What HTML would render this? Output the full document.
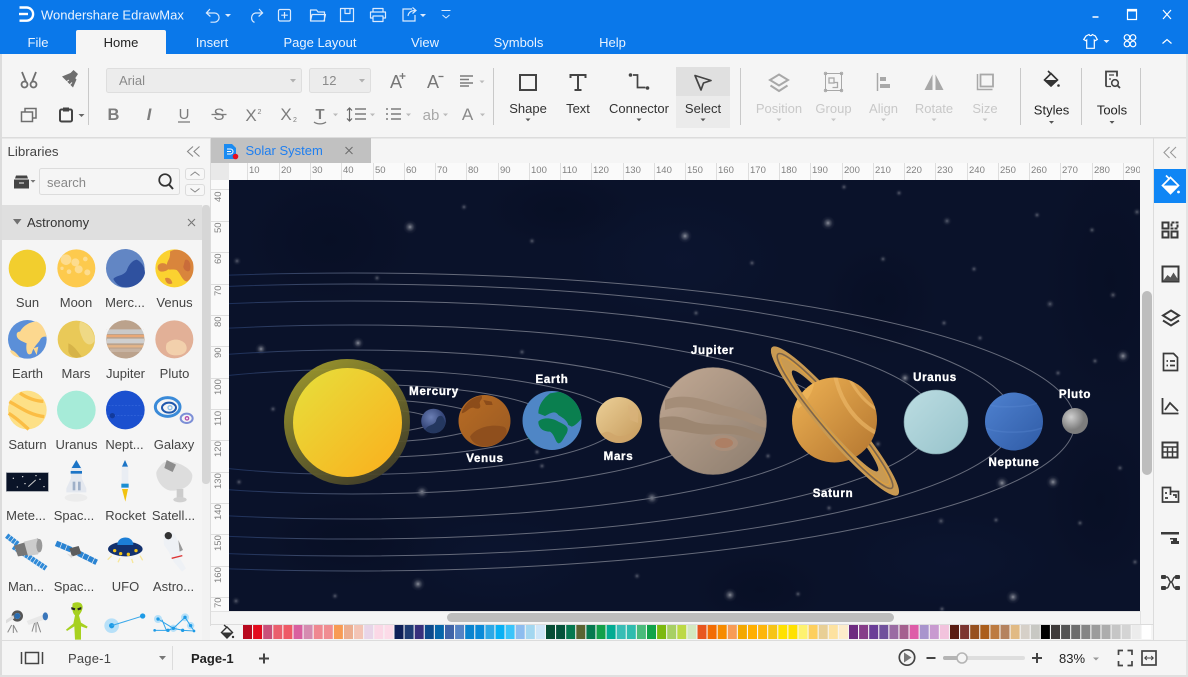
<!DOCTYPE html>
<html><head><meta charset="utf-8"><title>Wondershare EdrawMax</title>
<style>
html,body{margin:0;padding:0;background:#f5f5f5;overflow:hidden}
svg{display:block}
text{font-family:"Liberation Sans",sans-serif;font-size:13px;fill:#444}
.t{fill:#eaf3fe}
.lb{text-anchor:middle}
.dis{fill:#c8c8c8;text-anchor:middle}
.dk{fill:#333;text-anchor:middle}
.r{font-size:9.5px;fill:#808080}
.p{font-family:"Liberation Sans",sans-serif;font-weight:bold;font-size:11.5px;letter-spacing:.7px;fill:#fff;text-anchor:middle;stroke:#fff;stroke-width:.35}
.w{fill:none;stroke:#dbeafd;stroke-width:1.2}
.g{fill:none;stroke:#6e6e6e;stroke-width:1.5}
.gd{fill:none;stroke:#444;stroke-width:1.7}
.ds{fill:none;stroke:#a8a8a8;stroke-width:1.5}
</style></head><body>
<svg xmlns="http://www.w3.org/2000/svg" width="1188" height="677" viewBox="0 0 1188 677">
<defs>
<radialGradient id="st"><stop offset="0" stop-color="#fff" stop-opacity=".52"/><stop offset=".3" stop-color="#fff" stop-opacity=".26"/><stop offset=".65" stop-color="#fff" stop-opacity=".06"/><stop offset="1" stop-color="#fff" stop-opacity="0"/></radialGradient>
<radialGradient id="blob"><stop offset="0" stop-color="#030818" stop-opacity=".28"/><stop offset="1" stop-color="#030818" stop-opacity="0"/></radialGradient>
<radialGradient id="blob2"><stop offset="0" stop-color="#0f1b3c" stop-opacity=".3"/><stop offset="1" stop-color="#0f1b3c" stop-opacity="0"/></radialGradient>
<linearGradient id="orb" gradientUnits="userSpaceOnUse" x1="229" y1="0" x2="420" y2="0"><stop offset="0" stop-color="#1c2f5a"/><stop offset="1" stop-color="#656a7a"/></linearGradient>
<linearGradient id="halo" x1="0.1" y1="0" x2=".7" y2="1"><stop offset="0" stop-color="#a8a22c"/><stop offset="1" stop-color="#45412a"/></linearGradient>
<linearGradient id="sun" x1="0" y1="0" x2="1" y2="1"><stop offset="0" stop-color="#e6e03c"/><stop offset="1" stop-color="#fbae1c"/></linearGradient>
<linearGradient id="ven" x1="0" y1="0" x2="1" y2="1"><stop offset="0" stop-color="#b86c24"/><stop offset="1" stop-color="#9a5a22"/></linearGradient>
<linearGradient id="mars" x1="0" y1="0" x2="1" y2="1"><stop offset="0" stop-color="#ecd098"/><stop offset="1" stop-color="#c59a5c"/></linearGradient>
<linearGradient id="jup" x1="0" y1="0" x2=".9" y2="1"><stop offset="0" stop-color="#c2a994"/><stop offset="1" stop-color="#8f7f70"/></linearGradient>
<linearGradient id="sat" x1="0" y1="0" x2="1" y2="1"><stop offset="0" stop-color="#eeb254"/><stop offset="1" stop-color="#b3752f"/></linearGradient>
<linearGradient id="ura" x1="0" y1="0" x2="1" y2="1"><stop offset="0" stop-color="#bcdde2"/><stop offset="1" stop-color="#97c3cb"/></linearGradient>
<linearGradient id="nep" x1="0" y1="0" x2="1" y2="1"><stop offset="0" stop-color="#4f82d0"/><stop offset="1" stop-color="#2f5ba6"/></linearGradient>
<radialGradient id="plu" cx=".35" cy=".35"><stop offset="0" stop-color="#cfcfcf"/><stop offset="1" stop-color="#7d7d7d"/></radialGradient>
<radialGradient id="mer" cx=".4" cy=".35"><stop offset="0" stop-color="#6b7fb4"/><stop offset="1" stop-color="#36477a"/></radialGradient>
<clipPath id="cv"><rect x="229" y="180" width="911" height="431"/></clipPath>
<clipPath id="hr"><rect x="229" y="163" width="911" height="17"/></clipPath>
<clipPath id="lc"><rect x="0" y="0" width="606" height="765"/></clipPath>
<clipPath id="ringF"><rect x="-110" y="0" width="220" height="40"/></clipPath>
<clipPath id="satC"><circle cx="834.5" cy="420" r="42.5"/></clipPath>
<clipPath id="jupC"><circle cx="713" cy="421" r="53.5"/></clipPath>
<clipPath id="earC"><circle cx="552" cy="420.5" r="29.5"/></clipPath>
<clipPath id="merC"><circle cx="433.5" cy="421" r="12.3"/></clipPath>
</defs>

<rect width="1188" height="677" fill="#f5f5f5"/>
<!-- title bar -->
<rect width="1188" height="54" fill="#0a78ea"/>
<path d="M76 54V32a2 2 0 0 1 2-2h86a2 2 0 0 1 2 2v22z" fill="#f5f5f5"/>
<g fill="none" stroke="#fff" stroke-width="2.4"><path d="M19.500 7.500h7a6.600 6.600 0 0 1 0 13.200H19.500"/><path d="M19 14h9"/></g>
<text x="41" y="19.500" class="t">Wondershare EdrawMax</text>
<g class="w">
<path d="M210 9l-3.600 4 4 3.500"/><path d="M206.500 13h8a4.600 4.600 0 0 1 0 9.200h-4"/>
<path d="M259 9l3.600 4-4 3.500"/><path d="M262.500 13h-7a5 5 0 0 0-1 9.400"/>
<rect x="278.500" y="9.500" width="12" height="11.500" rx="1.500"/><path d="M284.500 12v6.500M281.200 15.200h6.600"/>
<path d="M310.500 21V10h6l1.500 2h6.500v9zM310.500 21l1.500-6.500h13.500L324 21" stroke-linejoin="round"/>
<path d="M340.500 8.500h13v13h-13zM345 8.500v5h5v-5" stroke-linejoin="round"/>
<path d="M373 12V8.500h10V12M373 18h-2.500v-6h15v6H383M373 16h10v5.500h-10z" stroke-linejoin="round"/>
<path d="M412 9h-9v12h12v-6"/><path d="M408 16c.5-3.500 3-5.500 7.500-5.500M412.500 7.500l3.500 3-3.500 3"/>
<path d="M441.500 10.500h9M442.500 15l3.500 3 3.500-3" stroke-width="1"/>
<path d="M1092.500 17h6" stroke="#fff" stroke-width="1.500"/><path d="M1127.500 9.500h9v10h-9z" stroke="#fff"/><path d="M1127.500 10.500h9" stroke="#fff" stroke-width="2"/><path d="M1163 10l8 9M1171 10l-8 9" stroke="#fff"/>
<path d="M1086 36l3-1.500c.8 1.600 2.500 1.600 3.300 0l3 1.500 2 3.500-2.300 1.300-.7-.7v8.200h-7.600v-8.200l-.7.700-2.300-1.300z" stroke="#fff"/>
<g stroke="#fff"><circle cx="1127" cy="37.500" r="2.800"/><circle cx="1133" cy="37.500" r="2.800"/><circle cx="1127" cy="44" r="2.800"/><circle cx="1133" cy="44" r="2.800"/></g>
<path d="M1162.500 43.500l4.500-4 4.500 4" stroke="#fff"/>
</g>
<g fill="#dbeafd"><path d="M225 14h6l-3 3zM420 14h6l-3 3zM1103.500 40h6l-3 3z"/></g>
<text x="38" y="47" class="t" text-anchor="middle">File</text>
<text x="121" y="47" text-anchor="middle" style="fill:#222">Home</text>
<text x="212" y="47" class="t" text-anchor="middle">Insert</text>
<text x="320" y="47" class="t" text-anchor="middle">Page Layout</text>
<text x="425" y="47" class="t" text-anchor="middle">View</text>
<text x="518.500" y="47" class="t" text-anchor="middle">Symbols</text>
<text x="612.500" y="47" class="t" text-anchor="middle">Help</text>

<!-- ribbon -->
<rect y="54" width="1188" height="83" fill="#f5f5f5"/>
<rect y="54" width="2" height="623" fill="#dcdcdc"/>
<rect y="137" width="1188" height="1.500" fill="#dcdcdc"/>
<rect x="1186" y="54" width="2" height="623" fill="#e4e4e4"/>
<g fill="#c9c9c9"><rect x="88" y="68" width="1" height="57"/><rect x="493" y="68" width="1" height="57"/><rect x="740" y="68" width="1" height="57"/><rect x="1020" y="68" width="1" height="57"/><rect x="1081" y="68" width="1" height="57"/><rect x="1140" y="68" width="1" height="57"/></g>
<rect x="676" y="67" width="54" height="29" fill="#e0e0e0"/><rect x="676" y="96" width="54" height="32" fill="#ebebeb"/>
<!-- clipboard icons -->
<g fill="none" stroke="#6e6e6e" stroke-width="1.800">
<circle cx="24.500" cy="84.500" r="3"/><circle cx="33.500" cy="84.500" r="3"/><path d="M26 82l-4-10M32 82l4-10"/>
</g>
<path d="M62 76.500l8.500-3.500 6 6.500-3.500 8zM70 73.500l3.500-3.500 4.500 4-3 4.500z" fill="#6e6e6e"/>
<path d="M66 82l3-2M69.500 85l2.500-2.500" stroke="#f5f5f5" stroke-width="1"/>
<g class="g" stroke-width="1.800"><rect x="21.500" y="112" width="11" height="9.500"/><path d="M25 112v-3.500h11v9.500h-3.500"/></g>
<g class="gd"><rect x="60" y="109.500" width="12" height="12" rx="1.500" stroke-width="2"/><rect x="63" y="107.500" width="6" height="4" fill="#444" stroke="none"/></g>
<path d="M78.500 114h6l-3 3z" fill="#666"/>
<!-- font -->
<rect x="106.500" y="68.500" width="195" height="24" rx="2" fill="#ececec" stroke="#dedede"/>
<rect x="309.500" y="68.500" width="61" height="24" rx="2" fill="#ececec" stroke="#dedede"/>
<text x="119" y="85" style="fill:#8a8a8a">Arial</text><text x="322" y="85" style="fill:#8a8a8a">12</text>
<path d="M290 79h6l-3 3.500zM359 79h6l-3 3.500z" fill="#b0b0b0"/>
<text x="390" y="88" style="font-size:18px;fill:#777">A</text><path d="M402.500 73v6M399.500 76h6" stroke="#777" stroke-width="1.300"/>
<text x="427" y="88" style="font-size:18px;fill:#777">A</text><path d="M438.500 76.500h5" stroke="#777" stroke-width="1.300"/>
<g stroke="#7d7d7d" stroke-width="1.500"><path d="M460 76h13M460 79.500h9M460 83h13M460 86h9"/></g>
<path d="M479.500 80.500h5l-2.500 2.800z" fill="#bbb"/>
<text x="113.500" y="120" text-anchor="middle" style="font-size:16.500px;font-weight:bold;fill:#7d7d7d">B</text>
<text x="149" y="120" text-anchor="middle" style="font-size:16.500px;font-style:italic;font-weight:bold;fill:#7d7d7d">I</text>
<text x="184" y="119" text-anchor="middle" style="font-size:15px;fill:#7d7d7d">U</text><path d="M178 122h12" stroke="#7d7d7d" stroke-width="1.300"/>
<text x="219" y="120" text-anchor="middle" style="font-size:16.500px;fill:#7d7d7d">S</text><path d="M211.500 114.500h15" stroke="#7d7d7d" stroke-width="1.300"/>
<text x="251" y="121" text-anchor="middle" style="font-size:17px;fill:#7d7d7d">X</text><text x="259.500" y="114" text-anchor="middle" style="font-size:7px;fill:#7d7d7d">2</text>
<text x="286" y="120" text-anchor="middle" style="font-size:17px;fill:#7d7d7d">X</text><text x="295" y="122" text-anchor="middle" style="font-size:7px;fill:#7d7d7d">2</text>
<text x="320" y="119" text-anchor="middle" style="font-size:15px;font-weight:bold;fill:#7d7d7d">T</text><path d="M314 122c3 2.500 9 2.500 12 0" fill="none" stroke="#7d7d7d" stroke-width="1.300"/>
<path d="M349.500 108v13M347 110.500l2.500-2.500 2.500 2.500M347 118.500l2.500 2.500 2.500-2.500" fill="none" stroke="#666" stroke-width="1.200"/>
<path d="M355 109h11M355 114h11M355 119h11" stroke="#7d7d7d" stroke-width="1.600"/>
<g stroke="#7d7d7d" stroke-width="1.600"><path d="M386 109h2M386 114h2M386 119h2"/><path d="M391 109h10M391 114h10M391 119h10"/></g>
<text x="431" y="120" text-anchor="middle" style="font-size:15px;fill:#a8a8a8">ab</text>
<text x="467.500" y="120" text-anchor="middle" style="font-size:17px;fill:#8a8a8a">A</text>
<path d="M333 113.500h5l-2.500 2.800zM370 113.500h5l-2.500 2.800zM406 113.500h5l-2.500 2.800zM443 113.500h5l-2.500 2.800zM480 113.500h5l-2.500 2.800z" fill="#bbb"/>
<!-- big tools -->
<rect x="520" y="75" width="16" height="15" fill="none" stroke="#444" stroke-width="2"/>
<path d="M570.500 78v-3h15v3M578 75v15M574.500 90h7" fill="none" stroke="#444" stroke-width="2"/>
<circle cx="630.500" cy="75" r="1.800" fill="#444"/><circle cx="647.500" cy="88" r="1.800" fill="#444"/><path d="M633 75h4.500v12.500h8" fill="none" stroke="#444" stroke-width="1.700"/>
<path d="M695 75.500l16 5-7.500 2.500-2.500 7z" fill="none" stroke="#444" stroke-width="1.700" stroke-linejoin="round"/>
<text x="528" y="113" class="dk">Shape</text><text x="578" y="113" class="dk">Text</text><text x="639" y="113" class="dk">Connector</text><text x="703" y="113" class="dk">Select</text>
<path d="M525.500 118.500h5l-2.500 2.800zM636.500 118.500h5l-2.500 2.800zM700.500 118.500h5l-2.500 2.800z" fill="#555"/>
<!-- disabled -->
<path d="M779 74.500l9 5.500-9 5.500-9-5.500zM770.500 85.500l8.500 5.500 8.500-5.500" fill="none" stroke="#a8a8a8" stroke-width="2"/>
<rect x="825.500" y="73.500" width="16" height="17" fill="none" stroke="#a8a8a8" stroke-width="1"/><rect x="829" y="78" width="5" height="5" fill="none" stroke="#a8a8a8" stroke-width="1.300"/><path d="M834 82.500h3.500v5h-5" fill="none" stroke="#a8a8a8" stroke-width="1.300"/>
<g fill="none" stroke="#a8a8a8"><circle cx="825.500" cy="73.500" r="1.200"/><circle cx="841.500" cy="73.500" r="1.200"/><circle cx="825.500" cy="90.500" r="1.200"/><circle cx="841.500" cy="90.500" r="1.200"/></g>
<path d="M877.500 73v18" stroke="#a8a8a8" stroke-width="1.500"/><rect x="880" y="77" width="6" height="4" fill="#a8a8a8"/><rect x="880" y="84" width="10" height="4" fill="#a8a8a8"/>
<path d="M932.500 74.500v15.500h-8zM935.500 74.500v15.500h8z" fill="#a8a8a8"/>
<path d="M977.500 74v15.500h15" fill="none" stroke="#a8a8a8" stroke-width="1.500"/><rect x="980.500" y="74.500" width="12.500" height="12" fill="none" stroke="#a8a8a8" stroke-width="1.800"/>
<text x="779" y="113" class="dis">Position</text><text x="833.500" y="113" class="dis">Group</text><text x="883.500" y="113" class="dis">Align</text><text x="934" y="113" class="dis">Rotate</text><text x="985" y="113" class="dis">Size</text>
<path d="M776.500 118.500h5l-2.500 2.800zM831 118.500h5l-2.500 2.800zM881 118.500h5l-2.500 2.800zM931.500 118.500h5l-2.500 2.800zM982.500 118.500h5l-2.500 2.800z" fill="#c8c8c8"/>
<path d="M1051 73.500l6.500 6.500-6.500 6-6.500-6zM1048 71l3 3" fill="none" stroke="#333" stroke-width="1.600"/><path d="M1044.500 80h13l-6.500 6z" fill="#333"/><circle cx="1058.500" cy="85.500" r="1.300" fill="#333"/>
<path d="M1106 86.500V71.500h11v5" fill="none" stroke="#444" stroke-width="1.800"/><path d="M1106 86.500h5M1109 75h5M1109 79h2" stroke="#444" stroke-width="1.300"/><circle cx="1115" cy="83" r="3.300" fill="none" stroke="#444" stroke-width="1.600"/><path d="M1117.500 85.500l2.500 2.500" stroke="#444" stroke-width="1.800"/>
<text x="1051.500" y="114.500" class="dk" style="fill:#222">Styles</text><text x="1112" y="114.500" class="dk" style="fill:#222">Tools</text>
<path d="M1049 121h5l-2.500 2.800zM1109.500 121h5l-2.500 2.800z" fill="#555"/>

<!-- left panel -->
<text x="7.500" y="156" style="font-size:13.300px">Libraries</text>
<path d="M193 146.500l-5.500 5 5.500 5M199.500 146.500l-5.500 5 5.500 5" fill="none" stroke="#888" stroke-width="1.100"/>
<path d="M16 175.500h11l1 3H15zM14 179.500h15v9H14z" fill="#444"/><path d="M19 183h5" stroke="#f5f5f5"/>
<path d="M30.500 180h5l-2.500 2.800z" fill="#777"/>
<rect x="39.500" y="168.500" width="140" height="26" rx="2" fill="#f5f5f5" stroke="#dcdcdc"/>
<text x="47" y="187" style="fill:#888">search</text>
<circle cx="165" cy="180" r="5.800" fill="none" stroke="#333" stroke-width="1.700"/><path d="M169 184.500l4 4.500" stroke="#333" stroke-width="2"/>
<rect x="185.500" y="168.500" width="19" height="11" rx="2.500" fill="#f7f7f7" stroke="#dcdcdc"/><rect x="185.500" y="184.500" width="19" height="11" rx="2.500" fill="#f7f7f7" stroke="#dcdcdc"/>
<path d="M190.500 175.500l4.500-3.500 4.500 3.500M190.500 188.500l4.500 3.500 4.500-3.500" fill="none" stroke="#888"/>
<rect x="2" y="205" width="200" height="35" fill="#dfdfdf"/>
<path d="M13 219h8.500l-4.200 5.500z" fill="#707070"/>
<text x="27" y="227" style="fill:#333">Astronomy</text>
<path d="M188 219l7 7M195 219l-7 7" stroke="#777" stroke-width="1.100"/>
<rect x="202" y="205" width="8" height="435" fill="#f2f2f2"/><rect x="202" y="205" width="8" height="279" rx="3.500" fill="#d6d6d6"/>
<g>
<text x="27.500" y="307" class="lb">Sun</text><text x="76" y="307" class="lb">Moon</text><text x="125" y="307" class="lb">Merc...</text><text x="174.500" y="307" class="lb">Venus</text>
<text x="27.500" y="378" class="lb">Earth</text><text x="76" y="378" class="lb">Mars</text><text x="125.500" y="378" class="lb">Jupiter</text><text x="174.500" y="378" class="lb">Pluto</text>
<text x="27.500" y="449" class="lb">Saturn</text><text x="76.500" y="449" class="lb">Uranus</text><text x="124.500" y="449" class="lb">Nept...</text><text x="174" y="449" class="lb">Galaxy</text>
<text x="26" y="520" class="lb">Mete...</text><text x="74" y="520" class="lb">Spac...</text><text x="125.500" y="520" class="lb">Rocket</text><text x="173.500" y="520" class="lb">Satell...</text>
<text x="26" y="591" class="lb">Man...</text><text x="74" y="591" class="lb">Spac...</text><text x="125.500" y="591" class="lb">UFO</text><text x="173.500" y="591" class="lb">Astro...</text>
</g>
<!-- lib row 1-2 (zoom coords) -->
<g transform="translate(0,135) scale(.33333)">
<circle cx="82" cy="400" r="56" fill="#f2ce2e"/>
<circle cx="229" cy="400" r="57" fill="#fdca4d"/><g fill="#fddc8e"><circle cx="198" cy="374" r="16"/><circle cx="226" cy="382" r="12"/><circle cx="236" cy="403" r="12"/><circle cx="207" cy="410" r="7"/><circle cx="262" cy="412" r="9"/><circle cx="256" cy="372" r="7"/><circle cx="186" cy="400" r="5"/></g>
<circle cx="376" cy="400" r="58" fill="#6286c4"/><path d="M340 432c10-12 30-8 40-25 5-15 15-30 30-33 12 5 25 20 25 40-5 25-30 44-58 43-20 0-30-12-37-25z" fill="#2f519f"/><path d="M385 372l12 3-4 9z" fill="#6286c4"/>
<circle cx="523" cy="400" r="57" fill="#fbd230"/><path d="M510 350c20-15 55 0 68 30 6 20 2 50-18 60-15-5-18-25-30-35-15-5-30 5-30-10 0-20 12-20 10-45z" fill="#d9853c"/><path d="M475 390c10-10 25-5 30 5s-10 15-20 15-15-12-10-20zM495 430c8-5 20 0 22 15-10 5-20 0-22-15z" fill="#d9853c"/><path d="M555 375c10-5 20 10 15 30-5 10-20 0-20-10z" fill="#c96c3a"/>
<circle cx="82" cy="613" r="58" fill="#5b8fd8"/><path d="M60 590c10-20 35-32 50-30 18 8 25 25 30 45-5 0-15-2-20 10-5 10-20 20-25 40-15 12-18-15-15-30-10-5-30-10-30-25 0-8 5-10 10-10z" fill="#fcd88f"/><path d="M30 648c5-5 15 0 30 20-15-2-25-10-30-20zM100 640l15-5-5 25z" fill="#fcd88f"/>
<circle cx="229" cy="613" r="56" fill="#e9c958"/><path d="M240 560c25 5 40 25 45 55-10 20-25 15-35 0-10-20-15-35-10-55z" fill="#efd985"/><path d="M205 625c15 5 25 20 40 40-20 8-35 0-40-15z" fill="#d6b348"/>
<circle cx="376" cy="613" r="58" fill="#bba28c"/><g fill="none"><path d="M320 590h112" stroke="#c9c9c9" stroke-width="14"/><path d="M318 603h116" stroke="#e8a877" stroke-width="7"/><path d="M320 618h112" stroke="#cfcfcf" stroke-width="14"/><path d="M322 634h108" stroke="#e3b488" stroke-width="7"/><path d="M330 646h92" stroke="#c7b3a2" stroke-width="10"/></g><circle cx="376" cy="613" r="60" fill="none" stroke="#f5f5f5" stroke-width="5"/>
<circle cx="523" cy="613" r="57" fill="#e2b097"/><path d="M500 625c15-15 40-15 55 0 10 15 5 30-15 35-25 5-50-5-40-35z" fill="#f2d0ac"/>
</g>
<!-- lib rows 3-6 (zoom coords) -->
<g transform="translate(0,385) scale(.33333)" clip-path="url(#lc)">
<circle cx="82" cy="75" r="58" fill="#fde087"/><g fill="none" stroke="#fbbd44" stroke-width="10"><path d="M60 24c20 15 50 25 70 25"/><path d="M28 50c30 15 60 40 105 45"/><path d="M26 85c25 15 45 35 60 48"/></g>
<circle cx="229" cy="75" r="58" fill="#a6ebd8"/>
<circle cx="376" cy="75" r="58" fill="#1b50cf"/><path d="M325 62h100M322 92h105" stroke="#3e6fe0" stroke-width="1.500" stroke-dasharray="6 4"/><circle cx="337" cy="92" r="8" fill="#123a9c"/>
<g fill="none"><ellipse cx="503" cy="66" rx="37" ry="28" stroke="#3a8ad8" stroke-width="9"/><ellipse cx="507" cy="68" rx="21" ry="15" stroke="#2059ad" stroke-width="6"/><circle cx="510" cy="68" r="6" stroke="#8fbfe6" stroke-width="4"/><ellipse cx="560" cy="100" rx="18" ry="14" stroke="#7d8fd6" stroke-width="6"/><circle cx="561" cy="100" r="5" stroke="#b44fb0" stroke-width="4"/></g>
<rect x="19" y="263" width="126" height="56" fill="#0a1428" stroke="#8a909a" stroke-width="2"/><g fill="#e8e8e8"><circle cx="40" cy="280" r="2"/><circle cx="68" cy="275" r="2"/><circle cx="120" cy="283" r="2"/><circle cx="52" cy="306" r="2"/><circle cx="132" cy="305" r="2"/><circle cx="75" cy="296" r="2"/><circle cx="108" cy="272" r="2"/></g><path d="M85 305l22-20" stroke="#ccc" stroke-width="3"/>
<path d="M229 225l16 25v30l14 30v12h-60v-12l14-30v-30z" fill="#e4e8ef"/><path d="M229 225l14 24h-28z" fill="#1b74c6"/><rect x="212" y="258" width="34" height="8" fill="#1b74c6"/><rect x="218" y="290" width="8" height="26" fill="#9fb0c8"/><rect x="234" y="290" width="8" height="26" fill="#9fb0c8"/><ellipse cx="228" cy="338" rx="34" ry="12" fill="#ececec"/>
<path d="M375 225l10 20v60h-20v-60z" fill="#e9edf3"/><path d="M375 225l9 20h-18z" fill="#1b74c6"/><rect x="364" y="296" width="22" height="12" fill="#1b8ed2"/><path d="M366 312h18l-8 38z" fill="#f1c20f"/>
<path d="M492 232c35-10 85 20 85 40 0 30-30 45-60 45-30 0-50-35-48-55 3-10 15-25 23-30z" fill="#ddd"/><path d="M500 225l28 14-10 22-25-12z" fill="#8d8d8d"/><rect x="530" y="312" width="20" height="28" fill="#ccc"/><ellipse cx="540" cy="344" rx="20" ry="8" fill="#d0d0d0"/>
<path d="M20 452l34 26M40 485l98 65" stroke="#2f8ad8" stroke-width="16" stroke-dasharray="9 2" fill="none"/><path d="M42 482l72-22 12 24-12 22-60 8z" fill="#777"/><path d="M72 470l40-10 10 30-8 18-30 5z" fill="#ccc"/><ellipse cx="118" cy="482" rx="9" ry="20" fill="#999"/>
<path d="M168 475l52 22M220 497l70 35" stroke="#2a83d2" stroke-width="17" stroke-dasharray="15 2" fill="none"/><path d="M208 490l28-7 8 22-28 10z" fill="#5d5d5d"/><path d="M200 505l20 8-6 6z" fill="#ddd"/>
<ellipse cx="376" cy="492" rx="52" ry="22" fill="#13316e"/><path d="M352 480c0-30 48-30 48 0z" fill="#1c7ed6"/><g fill="#f5c518"><circle cx="344" cy="497" r="5"/><circle cx="362" cy="506" r="5"/><circle cx="385" cy="508" r="5"/><circle cx="408" cy="497" r="5"/></g><path d="M335 512l-12 12M420 512l8 14M360 520l-6 12M395 522l4 12" stroke="#f7e79a" stroke-width="4"/>
<path d="M490 450c15-15 35-10 40 10 15 25 18 50 10 60l18 30-12 10-25-30-15-30-14-20z" fill="#eef1f5"/><circle cx="505" cy="452" r="11" fill="#333"/><path d="M515 520l32-8" stroke="#d33" stroke-width="4"/><path d="M535 465l14 30-10 5z" fill="#999"/>
<g fill="none" stroke="#888"><circle cx="52" cy="693" r="13" stroke-width="8" stroke="#555"/><path d="M35 720l-12 22M40 720v24M40 720l12 22" stroke-width="3"/><path d="M108 700l-12 40M108 700v42M108 700l14 42" stroke-width="3"/></g><circle cx="52" cy="693" r="9" fill="#2a6cb0"/><path d="M80 708l58-22 6 14-58 20z" fill="#e8e8e8"/><ellipse cx="136" cy="694" rx="8" ry="12" fill="#3a76ba"/><path d="M18 715l25-15-3-10-22 15z" fill="#ddd"/>
<path d="M218 655c14-6 28-4 30 10 0 12-8 22-11 26l6 22 20 12-3 5-17-6 0 40h-18l-2-40-22 14-3-4 22-18 5-25c-6-6-10-14-7-36z" fill="#a7d11f"/><path d="M214 666l12 4-2 6-10-3zM244 666l-12 4 2 6 10-3z" fill="#222"/>
<circle cx="335" cy="722" r="22" fill="#b7e0f8"/><circle cx="335" cy="722" r="8" fill="#1e9be6"/><path d="M335 722l93-29" stroke="#3aa8ea" stroke-width="3"/><circle cx="428" cy="693" r="8" fill="#1e9be6"/>
<g fill="#b7e0f8"><circle cx="474" cy="702" r="12"/><circle cx="555" cy="697" r="12"/><circle cx="572" cy="722" r="11"/><circle cx="520" cy="730" r="11"/></g>
<path d="M464 736h40M474 702l46 28 35-33 27 41-32-2-30-6-20 8-14-34" fill="none" stroke="#2fa4ea" stroke-width="3"/>
<g fill="#1e9be6"><circle cx="474" cy="702" r="5"/><circle cx="555" cy="697" r="5"/><circle cx="572" cy="722" r="5"/><circle cx="520" cy="730" r="5"/><circle cx="504" cy="736" r="5"/><circle cx="548" cy="736" r="5"/><circle cx="582" cy="738" r="4"/><circle cx="464" cy="736" r="4"/></g>
</g>

<!-- doc tabs -->
<rect x="211" y="138" width="160" height="25" fill="#c1c1c1"/>
<path d="M224 144h8l4 4v11h-12z" fill="#1a8bf2"/><path d="M227 149h3.500a2.500 2.500 0 0 1 0 5H227M227 151.500h4" fill="none" stroke="#fff" stroke-width="1"/><circle cx="235.500" cy="156.500" r="2.800" fill="#e60f1e"/>
<text x="245.500" y="155" style="fill:#1f7ff0">Solar System</text>
<path d="M345.500 147l7 7M352.500 147l-7 7" stroke="#6b6b6b" stroke-width="1"/>
<!-- right panel -->
<rect x="1153" y="138" width="1" height="503" fill="#dcdcdc"/>
<path d="M1169.500 147l-5.500 5.500 5.500 5.500M1176 147l-5.500 5.500 5.500 5.500" fill="none" stroke="#999" stroke-width="1.100"/>
<rect x="1154" y="169" width="32" height="34" fill="#0f86f5"/>
<path d="M1170.500 177.500l8 8-8 8-8-8zM1166 175.500l3.500 3.500" fill="none" stroke="#fff" stroke-width="1.700"/><path d="M1162.500 185.500h16l-8 8z" fill="#fff"/><circle cx="1178.500" cy="192" r="1.400" fill="#fff"/>
<g fill="none" stroke="#3a3a3a" stroke-width="2">
<rect x="1162.500" y="222.500" width="6" height="6"/><rect x="1171.500" y="222.500" width="6" height="6" stroke-dasharray="3 1"/><rect x="1162.500" y="231.500" width="6" height="6"/><rect x="1171.500" y="231.500" width="6" height="6"/>
<rect x="1162.500" y="266.500" width="16" height="15"/>
<path d="M1171 310.500l8 5-8 5-8-5zM1163 320.500l8 5 8-5"/>
<path d="M1163.500 353.500h10l4 4v13h-14zM1166.500 361h1.500M1170 361h5M1166.500 365.500h1.500M1170 365.500h5" stroke-width="1.700"/>
<path d="M1162.500 398v15.500h16M1165 410l5-7 4 4 4 4" stroke-width="1.800"/>
<rect x="1162.500" y="442.500" width="15" height="15"/><path d="M1163 447h14M1163 452h14M1167.500 447v10M1172.500 447v10" stroke-width="1.500"/>
<path d="M1162.500 487.500h8v4h8v10.500h-16zM1170.500 491v4M1165 493h2M1165 498h3M1173 495h3v3" stroke-width="1.700"/>
</g>
<path d="M1163 281l4.500-6 3 2.500 3-5 5.500 8.500z" fill="#555"/>
<path d="M1161 532h18v2.500h-18zM1170 538h7v3h2v3h-8v-3h2v-1.500h-3z" fill="#3a3a3a"/>
<g fill="none" stroke="#3a3a3a" stroke-width="1.500"><path d="M1164 577h3c2 0 2 5 4 5s2-5 4-5h3M1164 588h3c2 0 2-6 4-6s2 6 4 6h3"/></g>
<g fill="#3a3a3a"><rect x="1161" y="575" width="5" height="4" rx="1"/><rect x="1175" y="575" width="5" height="4" rx="1"/><rect x="1161" y="586" width="5" height="4" rx="1"/><rect x="1175" y="586" width="5" height="4" rx="1"/></g>
<rect x="1142" y="291" width="10" height="184" rx="5" fill="#bdbdbd"/>

<!-- rulers -->
<rect x="211" y="163" width="929" height="17" fill="#fafafa"/><rect x="211" y="180" width="18" height="431" fill="#fafafa"/>
<rect x="211" y="163" width="18" height="17" fill="#e9e9e9"/>
<rect x="210" y="138" width="1" height="488" fill="#dcdcdc"/>
<g stroke="#dedede"><path d="M247.500 163v17M279.500 163v17M310.500 163v17M341.500 163v17M373.500 163v17M404.500 163v17M435.500 163v17M466.500 163v17M498.500 163v17M529.500 163v17M560.500 163v17M591.500 163v17M623.500 163v17M654.500 163v17M685.500 163v17M716.500 163v17M748.500 163v17M779.500 163v17M810.500 163v17M842.500 163v17M873.500 163v17M904.500 163v17M935.500 163v17M967.500 163v17M998.500 163v17M1029.500 163v17M1060.500 163v17M1092.500 163v17M1123.500 163v17"/>
<path d="M211 189.500h18M211 221.500h18M211 252.500h18M211 284.500h18M211 315.500h18M211 346.500h18M211 378.500h18M211 409.500h18M211 440.500h18M211 472.500h18M211 503.500h18M211 534.500h18M211 566.500h18M211 597.500h18"/></g>
<g clip-path="url(#hr)">
<text class="r" x="249" y="173">10</text><text class="r" x="281" y="173">20</text><text class="r" x="312" y="173">30</text><text class="r" x="343" y="173">40</text><text class="r" x="375" y="173">50</text><text class="r" x="406" y="173">60</text><text class="r" x="437" y="173">70</text><text class="r" x="468" y="173">80</text><text class="r" x="500" y="173">90</text><text class="r" x="531" y="173">100</text><text class="r" x="562" y="173">110</text><text class="r" x="593" y="173">120</text><text class="r" x="625" y="173">130</text><text class="r" x="656" y="173">140</text><text class="r" x="687" y="173">150</text><text class="r" x="718" y="173">160</text><text class="r" x="750" y="173">170</text><text class="r" x="781" y="173">180</text><text class="r" x="812" y="173">190</text><text class="r" x="844" y="173">200</text><text class="r" x="875" y="173">210</text><text class="r" x="906" y="173">220</text><text class="r" x="937" y="173">230</text><text class="r" x="969" y="173">240</text><text class="r" x="1000" y="173">250</text><text class="r" x="1031" y="173">260</text><text class="r" x="1062" y="173">270</text><text class="r" x="1094" y="173">280</text><text class="r" x="1125" y="173">290</text>
</g>
<text class="r" transform="translate(221,202) rotate(-90)">40</text><text class="r" transform="translate(221,233) rotate(-90)">50</text><text class="r" transform="translate(221,264) rotate(-90)">60</text><text class="r" transform="translate(221,296) rotate(-90)">70</text><text class="r" transform="translate(221,327) rotate(-90)">80</text><text class="r" transform="translate(221,358) rotate(-90)">90</text><text class="r" transform="translate(221,395) rotate(-90)">100</text><text class="r" transform="translate(221,426) rotate(-90)">110</text><text class="r" transform="translate(221,457) rotate(-90)">120</text><text class="r" transform="translate(221,489) rotate(-90)">130</text><text class="r" transform="translate(221,520) rotate(-90)">140</text><text class="r" transform="translate(221,551) rotate(-90)">150</text><text class="r" transform="translate(221,583) rotate(-90)">160</text><text class="r" transform="translate(221,608) rotate(-90)">70</text>

<!-- canvas -->
<g clip-path="url(#cv)">
<rect x="229" y="180" width="911" height="431" fill="#0a122a"/>
<g>
<ellipse cx="330" cy="240" rx="90" ry="70" fill="url(#blob)"/><ellipse cx="1110" cy="280" rx="70" ry="140" fill="url(#blob)"/><ellipse cx="560" cy="210" rx="80" ry="40" fill="url(#blob)"/><ellipse cx="880" cy="300" rx="60" ry="60" fill="url(#blob)"/><ellipse cx="350" cy="540" rx="90" ry="50" fill="url(#blob)"/><ellipse cx="760" cy="590" rx="70" ry="40" fill="url(#blob)"/><ellipse cx="1100" cy="500" rx="60" ry="90" fill="url(#blob)"/>
<ellipse cx="680" cy="260" rx="110" ry="70" fill="url(#blob2)"/><ellipse cx="500" cy="560" rx="100" ry="50" fill="url(#blob2)"/><ellipse cx="950" cy="560" rx="110" ry="50" fill="url(#blob2)"/>
</g>
<!-- stars -->
<g fill="url(#st)">
<circle cx="410" cy="227" r="7"/><circle cx="685" cy="236" r="7"/><circle cx="828" cy="223" r="7"/><circle cx="422" cy="492" r="7"/><circle cx="652" cy="498" r="7"/><circle cx="1002" cy="483" r="7"/><circle cx="1053" cy="482" r="7"/><circle cx="418" cy="584" r="7"/><circle cx="730" cy="595" r="7"/><circle cx="1013" cy="597" r="7"/><circle cx="1123" cy="356" r="7"/>
<circle cx="261" cy="349" r="6"/><circle cx="358" cy="343" r="6"/><circle cx="905" cy="378" r="6"/>
</g>
<g fill="url(#st)" opacity=".6">
<circle cx="947" cy="221" r="5"/><circle cx="1050" cy="304" r="5"/><circle cx="1113" cy="295" r="4.500"/>
<circle cx="464" cy="207" r="4"/><circle cx="532" cy="241" r="4"/><circle cx="237" cy="261" r="4.500"/><circle cx="377" cy="278" r="4"/><circle cx="752" cy="263" r="4"/><circle cx="844" cy="187" r="4"/><circle cx="899" cy="193" r="4"/><circle cx="1037" cy="215" r="4"/><circle cx="1092" cy="230" r="4"/><circle cx="1137" cy="212" r="4.500"/><circle cx="883" cy="259" r="4"/><circle cx="974" cy="269" r="4"/><circle cx="696" cy="313" r="4"/><circle cx="944" cy="323" r="4"/><circle cx="980" cy="338" r="4"/><circle cx="1095" cy="361" r="4"/><circle cx="1058" cy="373" r="4"/><circle cx="522" cy="352" r="4"/><circle cx="273" cy="409" r="4"/><circle cx="239" cy="482" r="4"/><circle cx="537" cy="452" r="4"/><circle cx="542" cy="466" r="4"/><circle cx="768" cy="456" r="4"/><circle cx="878" cy="444" r="4.500"/><circle cx="829" cy="508" r="4"/><circle cx="941" cy="521" r="4.500"/><circle cx="996" cy="520" r="4"/><circle cx="1080" cy="523" r="4"/><circle cx="1120" cy="468" r="4"/><circle cx="1135" cy="562" r="4"/><circle cx="637" cy="576" r="4"/><circle cx="335" cy="596" r="4"/><circle cx="236" cy="601" r="4.500"/><circle cx="798" cy="594" r="4"/><circle cx="942" cy="609" r="4"/>
</g>
<!-- orbits -->
<g fill="none" stroke="#656a7a" stroke-width="1">
<path d="M395 410A81 13 0 0 1 433 421A81 13 0 0 1 395 432"/>
<path d="M395 400.200A132 22 0 0 1 484 421A132 22 0 0 1 395 441.800"/>
<path d="M395 385A200 37 0 0 1 552 421A200 37 0 0 1 395 457"/>
</g>
<g fill="none" stroke="url(#orb)" stroke-width="1">
<ellipse cx="352" cy="422" rx="267" ry="52.500"/>
<ellipse cx="352" cy="422" rx="361" ry="72"/>
<ellipse cx="352" cy="422" rx="483" ry="97"/>
<ellipse cx="352" cy="420" rx="583" ry="119"/>
<ellipse cx="352" cy="420" rx="662" ry="136"/>
<ellipse cx="352" cy="422" rx="723" ry="149"/>
</g>
<!-- sun -->
<circle cx="347" cy="422" r="63" fill="url(#halo)" fill-opacity=".93"/>
<circle cx="347.500" cy="422.500" r="54.500" fill="url(#sun)"/>
<!-- mercury -->
<circle cx="433.500" cy="421" r="12.300" fill="url(#mer)"/>
<path d="M425 430c3-6 9-4 11-9 1-4 3-6 6-5 3 3 4 8 3 12-5 6-14 7-20 2z" fill="#24375f" clip-path="url(#merC)"/>
<!-- venus -->
<circle cx="484.500" cy="421" r="26" fill="url(#ven)"/>
<g transform="translate(230,330) scale(.33333)">
<path d="M695 250c5-25 30-50 60-52 5 10-10 15-5 25 5 15-10 15-20 10-15 0-20 15-35 17z" fill="#8c4c1a"/><path d="M760 210l25 5 3 10-20 0z" fill="#8c4c1a"/>
<path d="M720 320c15-25 60-40 100-30 15 5 10 25 5 30-15 30-90 45-105 0z" fill="#8f4f1d"/>
</g>
<!-- earth -->
<circle cx="552" cy="420.500" r="29.500" fill="#4f86c6"/>
<g clip-path="url(#earC)"><g transform="translate(230,330) scale(.33333)" fill="#0a7f4f">
<path d="M960 190C940 205 925 225 925 250L945 258C960 250 975 240 985 255C995 262 1010 268 1015 285L1025 290C1040 285 1050 270 1058 262C1050 225 1025 195 990 185Z"/>
<path d="M925 275C935 262 965 262 985 275C1005 285 1020 290 1010 310C1000 325 995 340 985 340C975 335 975 315 960 305C940 305 925 295 925 275Z"/>
<path d="M885 310L905 335L925 352L900 352Z"/>
</g></g>
<!-- mars -->
<circle cx="619" cy="420" r="23" fill="url(#mars)"/>
<path d="M601 434c5-3 8-3 12 0 6 4 15 2 22-4-3 8-8 13-16 13-8 0-14-4-18-9z" fill="#cfa469" opacity=".7"/>
<path d="M628 405l10 6 0 12-8-3z" fill="#d9b27a" opacity=".7"/>
<!-- jupiter -->
<circle cx="713" cy="421" r="53.500" fill="url(#jup)"/>
<g clip-path="url(#jupC)">
<path d="M665 400c20-8 40 0 60 6 15 3 25 8 40 15l5 8c-15-3-30-12-50-14-20-4-35-12-55-5z" fill="#a48d78"/>
<path d="M660 418c15-4 25 0 35 4 20 5 40 0 55 8l20 8-5 6c-15-6-30-12-50-10-15 3-35-5-55-5z" fill="#9c8671"/>
<ellipse cx="724" cy="443" rx="14" ry="8" fill="#a98e7a"/><ellipse cx="724" cy="443" rx="9" ry="5" fill="#ad7f64"/>
</g>
<circle cx="713" cy="421" r="53.500" fill="none" stroke="#8a7b6f" stroke-width=".6"/>
<!-- saturn -->
<g transform="translate(835,421) rotate(49.600)">
<path fill-rule="evenodd" d="M-97 0a97 16 0 1 0 194 0a97 16 0 1 0-194 0zM-66 0a66 9 0 1 1 132 0a66 9 0 1 1-132 0z" fill="#c99a52"/>
<ellipse cx="0" cy="0" rx="88" ry="12.500" fill="none" stroke="#7e6549" stroke-width="1.600"/>
<ellipse cx="0" cy="0" rx="83" ry="10.800" fill="none" stroke="#dfa03c" stroke-width="1"/>
</g>
<circle cx="834.500" cy="420" r="42.500" fill="url(#sat)"/>
<g clip-path="url(#satC)" fill="none" stroke="#edb868" stroke-opacity=".65">
<path d="M835 375c5 25 20 50 50 62" stroke-width="4"/><path d="M848 375c8 18 20 32 40 40" stroke-width="3"/><path d="M795 405c10-8 15-18 15-30" stroke-width="10" stroke="#f0b85c"/>
</g>
<g transform="translate(835,421) rotate(49.600)"><g clip-path="url(#ringF)">
<path fill-rule="evenodd" d="M-97 0a97 16 0 1 0 194 0a97 16 0 1 0-194 0zM-66 0a66 9 0 1 1 132 0a66 9 0 1 1-132 0z" fill="#c99a52"/>
<ellipse cx="0" cy="0" rx="88" ry="12.500" fill="none" stroke="#7e6549" stroke-width="1.600"/>
<ellipse cx="0" cy="0" rx="83" ry="10.800" fill="none" stroke="#dfa03c" stroke-width="1"/>
</g></g>
<!-- outer planets -->
<circle cx="936" cy="422" r="32" fill="url(#ura)" stroke="#7a9aa2" stroke-width=".6"/>
<circle cx="1014" cy="421.500" r="29" fill="url(#nep)"/>
<path d="M990 405c8 3 40 2 47-2M986 428c10 5 40 6 56 0" stroke="#6090d8" stroke-width="1.500" fill="none" opacity=".3"/>
<circle cx="1075" cy="421" r="13" fill="url(#plu)"/>
<!-- labels -->
<text class="p" x="434" y="395">Mercury</text>
<text class="p" x="485" y="462">Venus</text>
<text class="p" x="552" y="383">Earth</text>
<text class="p" x="618.500" y="460">Mars</text>
<text class="p" x="712.500" y="354">Jupiter</text>
<text class="p" x="833" y="497">Saturn</text>
<text class="p" x="935" y="381">Uranus</text>
<text class="p" x="1014" y="466">Neptune</text>
<text class="p" x="1075" y="398">Pluto</text>
</g>

<!-- scroll h -->
<rect x="211" y="611" width="942" height="14" fill="#f5f5f5"/>
<rect x="211" y="611" width="929" height="1" fill="#e2e2e2"/><rect x="211" y="624" width="942" height="1" fill="#dcdcdc"/>
<rect x="1140" y="611" width="1" height="13" fill="#e2e2e2"/>
<rect x="447" y="613" width="447" height="9" rx="4.500" fill="#bdbdbd"/>
<!-- palette -->
<path d="M227 627l5.500 5.500-5.500 5.500-5.500-5.500zM224 625l3 2.500" fill="none" stroke="#333" stroke-width="1.400"/><path d="M221.500 632.500h11l-5.500 5.500z" fill="#333"/><circle cx="233" cy="637" r="1.200" fill="#333"/>
<g>
<rect x="243" y="625" width="9" height="14" fill="#b8091e"/><rect x="253.100" y="625" width="9" height="14" fill="#e30b1d"/><rect x="263.200" y="625" width="9" height="14" fill="#c9507a"/><rect x="273.300" y="625" width="9" height="14" fill="#ea5f6d"/><rect x="283.400" y="625" width="9" height="14" fill="#ee5a66"/><rect x="293.500" y="625" width="9" height="14" fill="#d9609f"/><rect x="303.600" y="625" width="9" height="14" fill="#d58cb0"/><rect x="313.700" y="625" width="9" height="14" fill="#ef8890"/><rect x="323.800" y="625" width="9" height="14" fill="#f08d91"/><rect x="333.900" y="625" width="9" height="14" fill="#f89b54"/>
<rect x="344" y="625" width="9" height="14" fill="#ecae90"/><rect x="354.100" y="625" width="9" height="14" fill="#f3c4b5"/><rect x="364.200" y="625" width="9" height="14" fill="#e8d5e8"/><rect x="374.300" y="625" width="9" height="14" fill="#fbd8e6"/><rect x="384.400" y="625" width="9" height="14" fill="#fcdbe8"/><rect x="394.500" y="625" width="9" height="14" fill="#0f2058"/><rect x="404.600" y="625" width="9" height="14" fill="#1f3c73"/><rect x="414.700" y="625" width="9" height="14" fill="#37307c"/><rect x="424.800" y="625" width="9" height="14" fill="#0d4a8c"/><rect x="434.900" y="625" width="9" height="14" fill="#0666aa"/>
<rect x="445" y="625" width="9" height="14" fill="#3f64a8"/><rect x="455.100" y="625" width="9" height="14" fill="#5583c4"/><rect x="465.200" y="625" width="9" height="14" fill="#0a84cf"/><rect x="475.300" y="625" width="9" height="14" fill="#0a8ad8"/><rect x="485.400" y="625" width="9" height="14" fill="#2ea8e6"/><rect x="495.500" y="625" width="9" height="14" fill="#09b0f4"/><rect x="505.600" y="625" width="9" height="14" fill="#3ac4fa"/><rect x="515.700" y="625" width="9" height="14" fill="#8dbdef"/><rect x="525.800" y="625" width="9" height="14" fill="#a3d7f0"/><rect x="535.900" y="625" width="9" height="14" fill="#cfe6f8"/>
<rect x="546" y="625" width="9" height="14" fill="#064d34"/><rect x="556.100" y="625" width="9" height="14" fill="#04533a"/><rect x="566.200" y="625" width="9" height="14" fill="#05784f"/><rect x="576.300" y="625" width="9" height="14" fill="#5a6332"/><rect x="586.400" y="625" width="9" height="14" fill="#05794f"/><rect x="596.500" y="625" width="9" height="14" fill="#12a04a"/><rect x="606.600" y="625" width="9" height="14" fill="#03ab92"/><rect x="616.700" y="625" width="9" height="14" fill="#38bdb5"/><rect x="626.800" y="625" width="9" height="14" fill="#2fbcae"/><rect x="636.900" y="625" width="9" height="14" fill="#49bb7b"/>
<rect x="647" y="625" width="9" height="14" fill="#10a349"/><rect x="657.100" y="625" width="9" height="14" fill="#7cb90e"/><rect x="667.200" y="625" width="9" height="14" fill="#a7d064"/><rect x="677.300" y="625" width="9" height="14" fill="#bcd944"/><rect x="687.400" y="625" width="9" height="14" fill="#d3e8c0"/><rect x="697.500" y="625" width="9" height="14" fill="#e8561f"/><rect x="707.600" y="625" width="9" height="14" fill="#f26d04"/><rect x="717.700" y="625" width="9" height="14" fill="#f68b00"/><rect x="727.800" y="625" width="9" height="14" fill="#f79c56"/><rect x="737.900" y="625" width="9" height="14" fill="#f3a800"/>
<rect x="748" y="625" width="9" height="14" fill="#ffaf00"/><rect x="758.100" y="625" width="9" height="14" fill="#fdb60b"/><rect x="768.200" y="625" width="9" height="14" fill="#f6c416"/><rect x="778.300" y="625" width="9" height="14" fill="#ffe100"/><rect x="788.400" y="625" width="9" height="14" fill="#ffe100"/><rect x="798.500" y="625" width="9" height="14" fill="#fef270"/><rect x="808.600" y="625" width="9" height="14" fill="#fdcf5d"/><rect x="818.700" y="625" width="9" height="14" fill="#e8cf95"/><rect x="828.800" y="625" width="9" height="14" fill="#fde2a0"/><rect x="838.900" y="625" width="9" height="14" fill="#fdeccb"/>
<rect x="849" y="625" width="9" height="14" fill="#6e2b80"/><rect x="859.100" y="625" width="9" height="14" fill="#863c89"/><rect x="869.200" y="625" width="9" height="14" fill="#6a3d97"/><rect x="879.300" y="625" width="9" height="14" fill="#70509c"/><rect x="889.400" y="625" width="9" height="14" fill="#9a6ba3"/><rect x="899.500" y="625" width="9" height="14" fill="#a5608f"/><rect x="909.600" y="625" width="9" height="14" fill="#de5ca8"/><rect x="919.700" y="625" width="9" height="14" fill="#a994cd"/><rect x="929.800" y="625" width="9" height="14" fill="#c89ad0"/><rect x="939.900" y="625" width="9" height="14" fill="#f2c3dd"/>
<rect x="950" y="625" width="9" height="14" fill="#5a1c12"/><rect x="960.100" y="625" width="9" height="14" fill="#7c3530"/><rect x="970.200" y="625" width="9" height="14" fill="#97501f"/><rect x="980.300" y="625" width="9" height="14" fill="#ab5e1c"/><rect x="990.400" y="625" width="9" height="14" fill="#bd7b41"/><rect x="1000.500" y="625" width="9" height="14" fill="#b5835f"/><rect x="1010.600" y="625" width="9" height="14" fill="#e1ba84"/><rect x="1020.700" y="625" width="9" height="14" fill="#d6d0c8"/><rect x="1030.800" y="625" width="9" height="14" fill="#c8c8c3"/><rect x="1040.900" y="625" width="9" height="14" fill="#000"/>
<rect x="1051" y="625" width="9" height="14" fill="#3e3a39"/><rect x="1061.100" y="625" width="9" height="14" fill="#555"/><rect x="1071.200" y="625" width="9" height="14" fill="#6d6d6d"/><rect x="1081.300" y="625" width="9" height="14" fill="#868686"/><rect x="1091.400" y="625" width="9" height="14" fill="#9c9c9c"/><rect x="1101.500" y="625" width="9" height="14" fill="#adadad"/><rect x="1111.600" y="625" width="9" height="14" fill="#c6c6c6"/><rect x="1121.700" y="625" width="9" height="14" fill="#d4d4d4"/><rect x="1131.800" y="625" width="9" height="14" fill="#ececec"/><rect x="1141.900" y="625" width="9" height="14" fill="#fff"/>
</g>

<!-- status bar -->
<rect y="640" width="1188" height="1" fill="#dcdcdc"/>
<rect x="0" y="675" width="1188" height="2" fill="#e0e0e0"/>
<g fill="none" stroke="#444"><path d="M21.500 652v12M42.500 652v12" stroke-width="1.500"/><rect x="25.500" y="652.500" width="13" height="11" stroke-width="1.500"/></g>
<text x="68" y="663" style="letter-spacing:.2px">Page-1</text>
<path d="M159 656h7l-3.500 4z" fill="#777"/>
<rect x="172" y="646" width="1" height="24" fill="#dcdcdc"/>
<text x="191" y="663" style="font-weight:bold;fill:#222">Page-1</text>
<path d="M264 653.500v10M259 658.500h10" stroke="#444" stroke-width="2"/>
<circle cx="907" cy="657.500" r="7.700" fill="none" stroke="#444" stroke-width="1.700"/><path d="M904 652.500l7.500 5-7.500 5z" fill="#777"/>
<path d="M926.500 658h9" stroke="#444" stroke-width="2"/>
<rect x="943" y="656" width="82" height="4" rx="2" fill="#dedede"/><rect x="943" y="656" width="19" height="4" rx="2" fill="#b5b5b5"/>
<circle cx="962" cy="658" r="5" fill="#f5f5f5" stroke="#b5b5b5" stroke-width="1.600"/>
<path d="M1037 653v10M1032 658h10" stroke="#444" stroke-width="2"/>
<text x="1059" y="663" style="fill:#222">83%</text>
<path d="M1093 657.500h6l-3 3z" fill="#999"/>
<path d="M1118.500 655v-4.500h4.500M1127.500 650.500h4.500v4.500M1132 661v4.500h-4.500M1123 665.500h-4.500v-4.500" fill="none" stroke="#444" stroke-width="1.700"/>
<rect x="1142" y="651" width="14" height="14" fill="none" stroke="#444" stroke-width="1.700"/><path d="M1145 658h8M1146.800 656l-2 2 2 2M1151.200 656l2 2-2 2" fill="none" stroke="#444" stroke-width="1.100"/>
</svg>
</body></html>
